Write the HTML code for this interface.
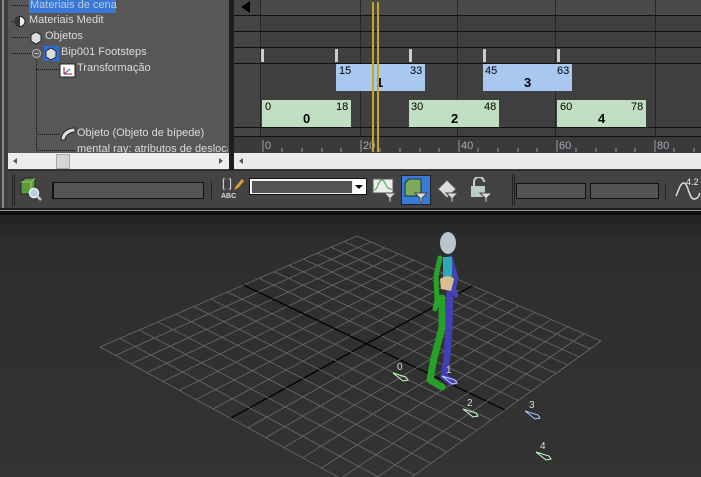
<!DOCTYPE html>
<html><head><meta charset="utf-8"><style>
*{margin:0;padding:0;box-sizing:border-box}
body{width:701px;height:477px;overflow:hidden;background:#2d2d2d;font-family:Tahoma,"Liberation Sans",sans-serif;position:relative}
.a{position:absolute}
.t{font-size:11px;color:#dcdcdc;white-space:nowrap;line-height:13px}
.n{font-size:11px;color:#000;line-height:12px;font-family:"Liberation Sans",sans-serif}
.b{font-weight:bold;font-size:13px}
</style></head><body>
<div class="a" style="left:0;top:0;width:701px;height:214px;background:#3c3c3c"></div>
<div class="a" style="left:2px;top:0;width:2px;height:212px;background:#8a8a8a"></div>
<div class="a" style="left:8px;top:0;width:221px;height:153px;background:#575757"></div>
<div class="a" style="left:229px;top:0;width:5px;height:170px;background:#1e1e1e"></div>
<svg class="a" style="left:8px;top:0" width="221" height="153">
<g stroke="#111" stroke-dasharray="1,1" fill="none">
<line x1="3" y1="5.5" x2="21" y2="5.5"/><line x1="3" y1="21.5" x2="13" y2="21.5"/><line x1="3" y1="37.5" x2="21" y2="37.5"/><line x1="3" y1="53.5" x2="26" y2="53.5"/>
<line x1="28.5" y1="60" x2="28.5" y2="150"/><line x1="28" y1="69.5" x2="52" y2="69.5"/><line x1="28" y1="134.5" x2="52" y2="134.5"/><line x1="28" y1="150.5" x2="68" y2="150.5"/>
</g>
<circle cx="28.5" cy="53.5" r="4" fill="none" stroke="#bbb"/><line x1="26" y1="53.5" x2="31" y2="53.5" stroke="#bbb"/>
<circle cx="12" cy="21.5" r="5" fill="#eee" stroke="#222"/><path d="M12 17a4.5 4.5 0 0 0 0 9z" fill="#333"/>
<path d="M23 35l5-3 5 3v6l-5 3-5-3z" fill="#ddd" stroke="#222"/>
<rect x="36" y="46" width="15" height="15" fill="#2d6fd6"/><path d="M38 51l5-3 5 3v6l-5 3-5-3z" fill="#ddd" stroke="#222"/>
<rect x="52" y="64" width="15" height="13" fill="#fff" stroke="#222"/><path d="M56 74v-7m0 7h8" stroke="#c00"/><path d="M56 74l6-5" stroke="#06c"/>
<path d="M53 140c0-8 7-12 14-12v4c-5 0-10 4-10 8z" fill="#ddd" stroke="#222"/>
</svg>
<div class="a" style="left:29px;top:0;width:87px;height:13px;background:#3a78d8"></div>
<div class="a t" style="left:30px;top:-1px;color:#bcd">Materiais de cena</div>
<div class="a t" style="left:29px;top:14px">Materiais Medit</div>
<div class="a t" style="left:45px;top:30px">Objetos</div>
<div class="a t" style="left:61px;top:46px">Bip001 Footsteps</div>
<div class="a t" style="left:77px;top:62px">Transformação</div>
<div class="a t" style="left:77px;top:127px">Objeto (Objeto de bípede)</div>
<div class="a t" style="left:77px;top:143px;width:151px;overflow:hidden">mental ray: atributos de deslocamento</div>
<div class="a" style="left:234px;top:0;width:467px;height:153px;background:#3f3f3f"></div>
<div class="a" style="left:234px;top:0;width:467px;height:15px;background:#4a4a4a"></div>
<div class="a" style="left:234px;top:0;width:26px;height:136px;background:#454545"></div>
<svg class="a" style="left:234px;top:0" width="467" height="153">
<g stroke="#262626"><line x1="26.5" y1="0" x2="26.5" y2="136"/><line x1="126.5" y1="0" x2="126.5" y2="136"/><line x1="223.5" y1="0" x2="223.5" y2="136"/><line x1="321.5" y1="0" x2="321.5" y2="136"/><line x1="421.5" y1="0" x2="421.5" y2="136"/></g>
<g stroke="#111"><line x1="0" y1="15.5" x2="467" y2="15.5"/><line x1="0" y1="31.5" x2="467" y2="31.5"/><line x1="0" y1="47.5" x2="467" y2="47.5"/><line x1="0" y1="63.5" x2="467" y2="63.5"/><line x1="0" y1="127.5" x2="467" y2="127.5"/><line x1="0" y1="136.5" x2="467" y2="136.5"/></g>
<path d="M7 7l9-6v12z" fill="#000"/>
<g fill="#ccc"><rect x="27" y="49" width="3" height="13"/><rect x="101" y="49" width="3" height="13"/><rect x="175" y="49" width="3" height="13"/><rect x="249" y="49" width="3" height="13"/><rect x="323" y="49" width="3" height="13"/></g>
<rect x="0" y="137" width="467" height="16" fill="#3a3a3a"/>
<g stroke="#999"><path d="M29 140v12M127 140v12M225 140v12M323 140v12M421 140v12"/>
<path d="M48 148v4M68 148v4M88 148v4M107 148v4M146 148v4M166 148v4M186 148v4M205 148v4M244 148v4M264 148v4M284 148v4M303 148v4M342 148v4M362 148v4M382 148v4M401 148v4M440 148v4M460 148v4"/></g>
<g fill="#aab" font-size="11" font-family="Liberation Sans,sans-serif"><text x="31" y="149">0</text><text x="129" y="149">20</text><text x="227" y="149">40</text><text x="325" y="149">60</text><text x="423" y="149">80</text></g>
</svg>
<div class="a" style="left:336px;top:64px;width:89px;height:27px;background:#a8c8ef"></div>
<div class="a" style="left:483px;top:64px;width:89px;height:27px;background:#a8c8ef"></div>
<div class="a" style="left:262px;top:100px;width:89px;height:27px;background:#c2dec2"></div>
<div class="a" style="left:409px;top:100px;width:90px;height:27px;background:#c2dec2"></div>
<div class="a" style="left:557px;top:100px;width:89px;height:27px;background:#c2dec2"></div>
<div class="a n" style="left:339px;top:65px">15</div><div class="a n" style="left:410px;top:65px">33</div><div class="a n b" style="left:376px;top:77px">1</div>
<div class="a n" style="left:485px;top:65px">45</div><div class="a n" style="left:557px;top:65px">63</div><div class="a n b" style="left:524px;top:77px">3</div>
<div class="a n" style="left:265px;top:101px">0</div><div class="a n" style="left:336px;top:101px">18</div><div class="a n b" style="left:303px;top:113px">0</div>
<div class="a n" style="left:411px;top:101px">30</div><div class="a n" style="left:484px;top:101px">48</div><div class="a n b" style="left:451px;top:113px">2</div>
<div class="a n" style="left:560px;top:101px">60</div><div class="a n" style="left:631px;top:101px">78</div><div class="a n b" style="left:598px;top:113px">4</div>
<div class="a" style="left:372px;top:2px;width:2px;height:150px;background:#c8a818"></div>
<div class="a" style="left:377px;top:2px;width:2px;height:150px;background:#c8a818"></div>
<div class="a" style="left:8px;top:153px;width:221px;height:16px;background:#ededed"></div>
<div class="a" style="left:56px;top:154px;width:14px;height:15px;background:#d6d6d6;border:1px solid #aaa"></div>
<div class="a" style="left:13px;top:158px;border:3px solid transparent;border-right:4px solid #555;border-left:0"></div>
<div class="a" style="left:219px;top:158px;border:3px solid transparent;border-left:4px solid #555;border-right:0"></div>
<div class="a" style="left:234px;top:153px;width:467px;height:16px;background:#ebebeb"></div>
<div class="a" style="left:239px;top:158px;border:3px solid transparent;border-right:4px solid #555;border-left:0"></div>
<div class="a" style="left:8px;top:170px;width:693px;height:38px;background:#434343;border-top:1px solid #2a2a2a"></div>
<div class="a" style="left:12px;top:174px;width:3px;height:32px;border-left:1px solid #222;border-right:1px solid #222"></div>
<svg class="a" style="left:18px;top:176px" width="26" height="26"><path d="M3 6l4-4h10v12l-4 4H3z" fill="#5a9a3a" stroke="#223"/><path d="M3 6h10v12M13 6l4-4" stroke="#9c6" fill="none"/><circle cx="16" cy="17" r="4.5" fill="#bcd" stroke="#eee" stroke-width="1.5"/><path d="M19 20l4 4" stroke="#ccc" stroke-width="2.5"/></svg>
<div class="a" style="left:52px;top:182px;width:152px;height:17px;background:#555;border:1px solid #111;border-left:2px solid #111"></div>
<div class="a" style="left:211px;top:181px;width:1px;height:18px;background:#222"></div>
<div class="a t" style="left:222px;top:177px;font-size:12px">[ ]</div><div class="a" style="left:221px;top:193px;font-size:7px;color:#ddd;font-weight:bold">ABC</div>
<svg class="a" style="left:232px;top:178px" width="12" height="14"><path d="M2 12l2-4 6-7 2 2-6 7z" fill="#e8a030"/></svg>
<div class="a" style="left:249px;top:178px;width:118px;height:17px;background:#fff;border:1px solid #111"></div>
<div class="a" style="left:251px;top:180px;width:102px;height:14px;background:#555;border:1px solid #eee"></div>
<div class="a" style="left:355px;top:185px;border:4px solid transparent;border-top:4px solid #000;border-bottom:0"></div>
<svg class="a" style="left:372px;top:177px" width="28" height="28"><rect x="1" y="2" width="20" height="14" fill="#eee" stroke="#555"/><path d="M2 13c4 0 4-10 8-10s3 10 10 9" stroke="#3a3" fill="none"/><path d="M12 16h12l-5 5v4h-2v-4z" fill="#ddd" stroke="#444"/></svg>
<div class="a" style="left:401px;top:175px;width:30px;height:30px;background:#3a7ad8;border:1px solid #222"></div>
<svg class="a" style="left:403px;top:177px" width="28" height="28"><path d="M2 6l4-4h12v13l-4 4H2z" fill="#7aaa5a" stroke="#133"/><path d="M12 16h12l-5 5v4h-2v-4z" fill="#ddd" stroke="#444"/></svg>
<svg class="a" style="left:436px;top:177px" width="28" height="28"><path d="M2 12l9-9 9 9-9 9z" fill="#ddd" stroke="#555"/><path d="M10 16h12l-5 5v4h-2v-4z" fill="#ddd" stroke="#444"/></svg>
<svg class="a" style="left:470px;top:177px" width="28" height="28"><path d="M4 9V5a5 5 0 0 1 10 0" stroke="#ccc" stroke-width="2" fill="none"/><rect x="1" y="9" width="14" height="11" fill="#bcc"/><path d="M10 16h12l-5 5v4h-2v-4z" fill="#ddd" stroke="#444"/></svg>
<div class="a" style="left:512px;top:174px;width:3px;height:32px;border-left:1px solid #222;border-right:1px solid #222"></div>
<div class="a" style="left:516px;top:183px;width:70px;height:16px;background:#545454;border:1px solid #111"></div>
<div class="a" style="left:590px;top:183px;width:69px;height:16px;background:#545454;border:1px solid #111"></div>
<div class="a" style="left:665px;top:183px;width:1px;height:16px;background:#222"></div>
<svg class="a" style="left:674px;top:176px" width="27" height="26"><path d="M2 20c3-6 4-13 8-13s5 16 10 16 5-5 6-6" stroke="#ddd" fill="none" stroke-width="1.5"/><text x="12" y="9" font-size="9" fill="#eee" font-family="Liberation Sans">4.2</text></svg>
<div class="a" style="left:0;top:208px;width:701px;height:2px;background:#1c1c1c"></div>
<div class="a" style="left:0;top:210px;width:701px;height:1px;background:#8c96a4"></div>
<div class="a" style="left:0;top:211px;width:701px;height:4px;background:#0e0e0e"></div>
<div class="a" style="left:0;top:215px;width:701px;height:262px;background:linear-gradient(#222,#2e2e2e 30px,#333)"></div>
<svg class="a" id="vp" style="left:0;top:0" width="701" height="477"></svg>
<script>
var s=document.getElementById('vp');
var P=[[357,236],[601,341],[380,500],[100,347]];
function H(p){var x0=p[0][0],y0=p[0][1],x1=p[1][0],y1=p[1][1],x2=p[2][0],y2=p[2][1],x3=p[3][0],y3=p[3][1];
var dx1=x1-x2,dx2=x3-x2,dx3=x0-x1+x2-x3,dy1=y1-y2,dy2=y3-y2,dy3=y0-y1+y2-y3;var d=dx1*dy2-dx2*dy1;
var g=(dx3*dy2-dx2*dy3)/d,h=(dx1*dy3-dx3*dy1)/d;
return function(u,v){var X=(x1-x0+g*x1)*u+(x3-x0+h*x3)*v+x0,Y=(y1-y0+g*y1)*u+(y3-y0+h*y3)*v+y0,W=g*u+h*v+1;return[X/W,Y/W];}}
var f=H(P),N=16,h='';
for(var i=0;i<=N;i++){var t=i/N,c=(i==N/2)?'#000':'#6a6a6a',w=(i==N/2)?1.3:0.8;
var a=f(t,0),b=f(t,1);h+='<line x1="'+a[0]+'" y1="'+a[1]+'" x2="'+b[0]+'" y2="'+b[1]+'" stroke="'+c+'" stroke-width="'+w+'"/>';
a=f(0,t);b=f(1,t);h+='<line x1="'+a[0]+'" y1="'+a[1]+'" x2="'+b[0]+'" y2="'+b[1]+'" stroke="'+c+'" stroke-width="'+w+'"/>';}
h+='<g fill="none" stroke-linecap="round" stroke-linejoin="round">';
h+='<path d="M446 262l4 30l-1 35l-2 30l-3 20l8 5" stroke="#4040b4" stroke-width="7"/>';
h+='<path d="M450 258l6 20l-3 12l3 5" stroke="#4444b8" stroke-width="5"/>';
h+='<path d="M442 298l0 30l-8 30l-4 22l12 7" stroke="#26a026" stroke-width="7"/>';
h+='<path d="M440 258l-4 18l1 25l-2 8" stroke="#28a428" stroke-width="5"/>';
h+='</g>';
h+='<ellipse cx="448" cy="243" rx="8" ry="11" fill="#bcc4cc"/>';
h+='<path d="M443 257h9v25h-9z" fill="#30a8b8"/><path d="M440 279c5-4 12-3 14 0l-3 12l-10-2z" fill="#d8c090"/>';
var fp=[[398,376,'0','#cfc'],[447,379,'1','#ccf'],[468,412,'2','#cfc'],[530,414,'3','#acf'],[541,455,'4','#cfc']];
fp.forEach(function(q){h+='<path d="M'+(q[0]-5)+' '+(q[1]-3)+'l13 4l2 3l-5 1z" fill="none" stroke="'+q[3]+'" stroke-width="1"/><text x="'+(q[0]-1)+'" y="'+(q[1]-6)+'" font-size="10" fill="#ddd" font-family="Liberation Sans">'+q[2]+'</text>';});
s.innerHTML=h;
</script>
</body></html>
